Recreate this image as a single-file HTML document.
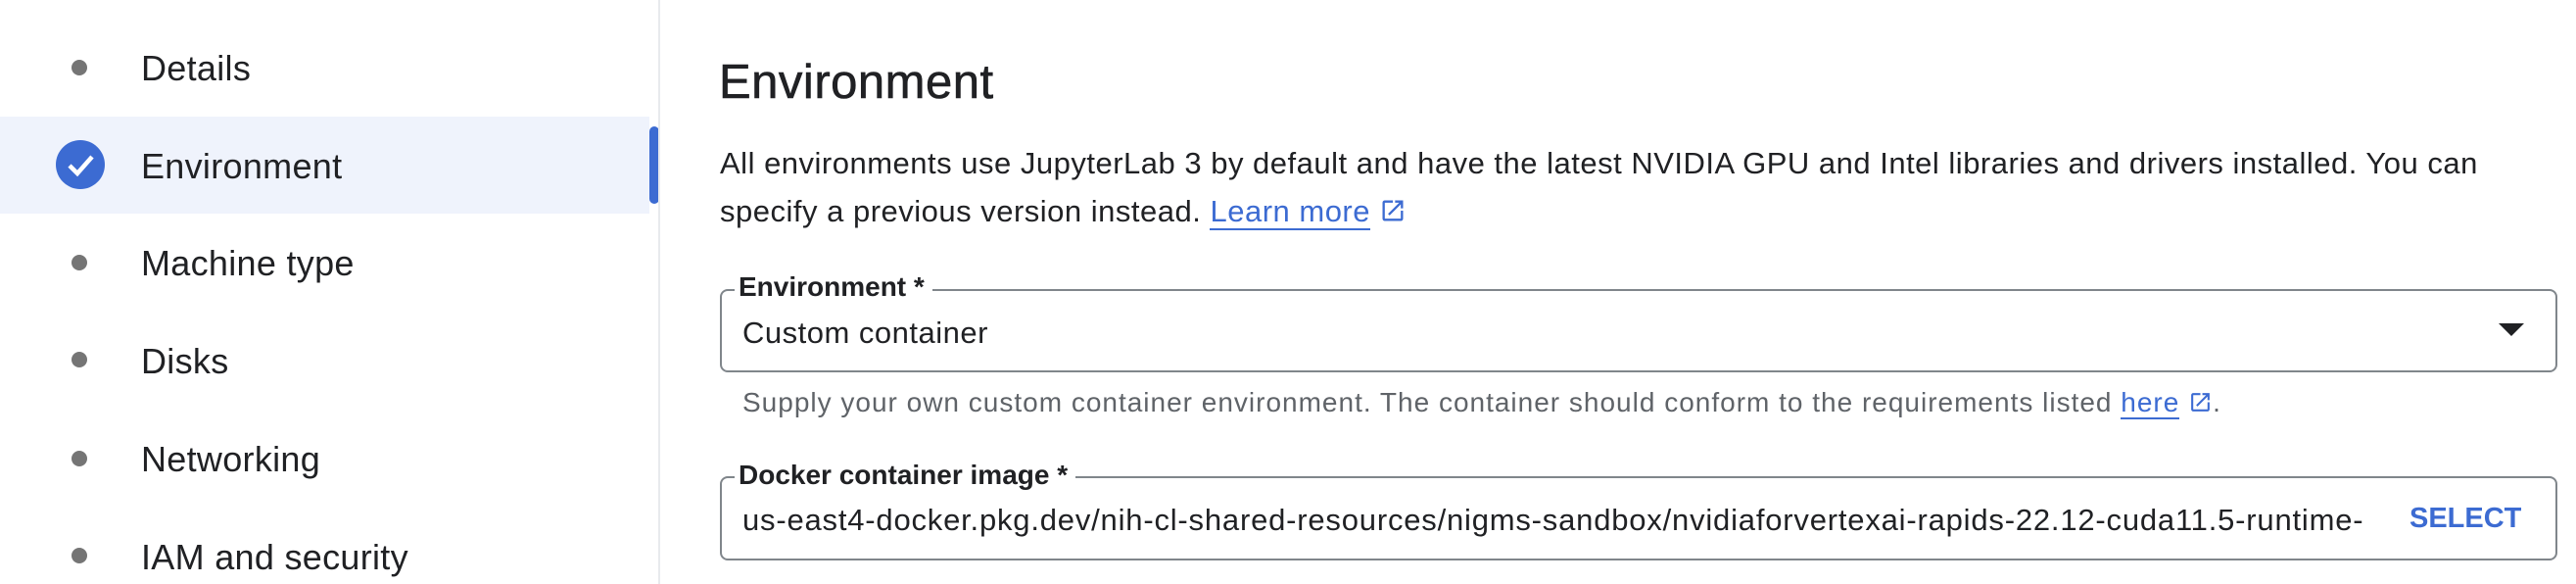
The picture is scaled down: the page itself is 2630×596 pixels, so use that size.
<!DOCTYPE html>
<html><head><meta charset="utf-8"><style>
*{margin:0;padding:0;box-sizing:border-box}
body{width:2630px;height:596px;overflow:hidden;background:#fff;font-family:"Liberation Sans",Arial,sans-serif;color:#202124;position:relative}
.a{position:absolute;white-space:nowrap}
.nav{left:144px;font-size:36px;color:#202124;letter-spacing:0.3px}
.dot{position:absolute;left:73px;width:16px;height:16px;border-radius:50%;background:#757575}
.blue{color:#3c6bd2}
.ext{display:inline-block;vertical-align:-3px}
.box{position:absolute;left:735px;width:1876px;border:2px solid #80868b;border-radius:8px}
.lbl{font-size:28px;font-weight:bold;background:#fff;padding:0 8px 0 4px;color:#202124}
</style></head><body>
<div class="a" style="left:0;top:119px;width:663px;height:99px;background:#eff3fc"></div>
<div class="a" style="left:663px;top:129px;width:10px;height:79px;background:#3c6bd2;border-radius:5px"></div>
<div class="a" style="left:672px;top:0;width:2px;height:596px;background:#e8eaed"></div>
<div class="dot" style="top:61px"></div>
<div class="a" style="left:57px;top:143px;width:50px;height:50px;border-radius:50%;background:#3c6bd2"></div>
<svg class="a" style="left:57px;top:143px" width="50" height="50" viewBox="0 0 50 50"><path d="M14 26 L22 34 L37 17" fill="none" stroke="#fff" stroke-width="4.5"/></svg>
<div class="dot" style="top:260px"></div>
<div class="dot" style="top:359px"></div>
<div class="dot" style="top:460px"></div>
<div class="dot" style="top:559px"></div>
<div class="a nav" style="top:49px">Details</div>
<div class="a nav" style="top:149px">Environment</div>
<div class="a nav" style="top:248px">Machine type</div>
<div class="a nav" style="top:348px">Disks</div>
<div class="a nav" style="top:448px">Networking</div>
<div class="a nav" style="top:548px">IAM and security</div>

<div class="a" style="left:734px;top:56px;font-size:49px;letter-spacing:0.5px;font-weight:500;-webkit-text-stroke:0.6px #202124">Environment</div>
<div class="a" style="left:735px;top:142px;font-size:31px;line-height:49px;letter-spacing:0.5px">All environments use JupyterLab 3 by default and have the latest NVIDIA GPU and Intel libraries and drivers installed. You can<br>specify a previous version instead. <span class="blue" style="border-bottom:2px solid #3c6bd2">Learn more</span> <svg class="ext" width="28" height="28" viewBox="0 0 24 24"><path d="M19 19H5V5h7V3H5a2 2 0 0 0-2 2v14a2 2 0 0 0 2 2h14a2 2 0 0 0 2-2v-7h-2v7zM14 3v2h3.6l-9.8 9.8 1.4 1.4L19 6.4V10h2V3h-7z" fill="#3c6bd2"/></svg></div>

<div class="box" style="top:295px;height:85px"></div>
<div class="a lbl" style="left:750px;top:277px">Environment *</div>
<div class="a" style="left:758px;top:322px;font-size:31px;letter-spacing:0.5px">Custom container</div>
<svg class="a" style="left:2551px;top:330px" width="26" height="14" viewBox="0 0 26 14"><path d="M0 0h26L13 13z" fill="#202124"/></svg>
<div class="a" style="left:758px;top:395px;font-size:28px;letter-spacing:1px;color:#5f6368">Supply your own custom container environment. The container should conform to the requirements listed <span class="blue" style="border-bottom:2px solid #3c6bd2">here</span> <svg class="ext" width="25" height="25" viewBox="0 0 24 24"><path d="M19 19H5V5h7V3H5a2 2 0 0 0-2 2v14a2 2 0 0 0 2 2h14a2 2 0 0 0 2-2v-7h-2v7zM14 3v2h3.6l-9.8 9.8 1.4 1.4L19 6.4V10h2V3h-7z" fill="#3c6bd2"/></svg>.</div>

<div class="box" style="top:486px;height:86px"></div>
<div class="a lbl" style="left:750px;top:469px">Docker container image *</div>
<div class="a" style="left:758px;top:513px;font-size:31px;letter-spacing:0.8px">us-east4-docker.pkg.dev/nih-cl-shared-resources/nigms-sandbox/nvidiaforvertexai-rapids-22.12-cuda11.5-runtime-</div>
<div class="a blue" style="left:2460px;top:513px;font-size:29px;font-weight:bold">SELECT</div>
</body></html>
